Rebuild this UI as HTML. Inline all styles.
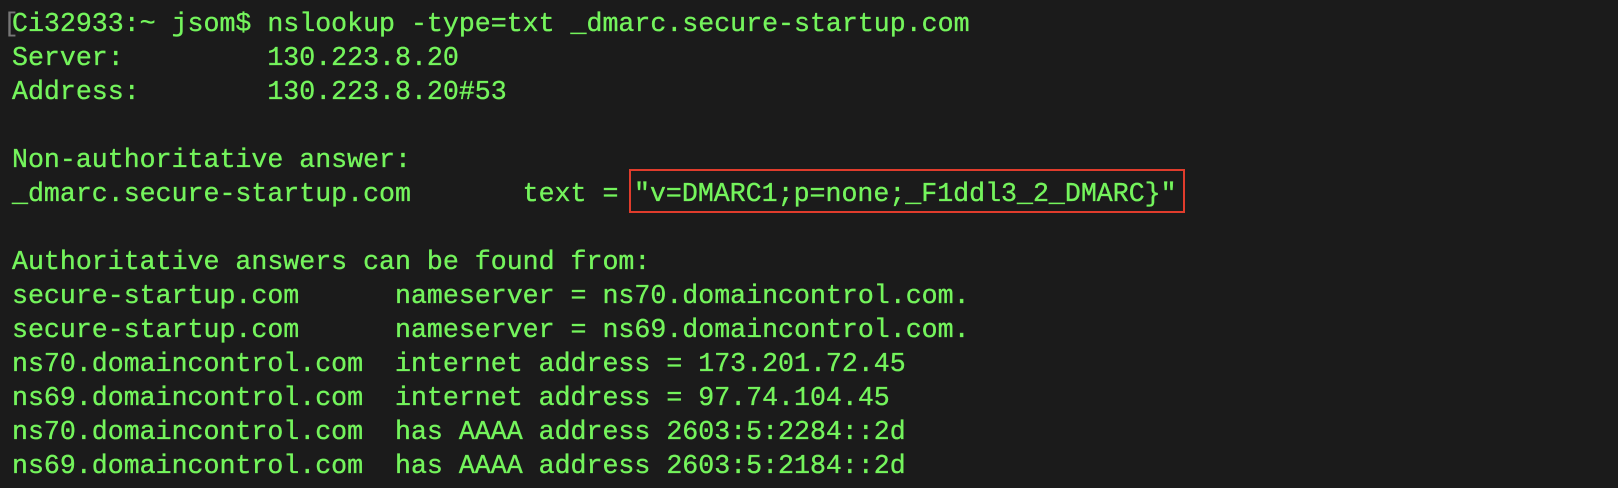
<!DOCTYPE html>
<html><head><style>
html,body{margin:0;padding:0;width:1618px;height:488px;background:#1b1b1b;overflow:hidden}
pre,.br,.q{font-family:"Liberation Mono",monospace;font-size:26.6px;line-height:34px;-webkit-text-stroke:0.35px #74f45c;}
pre{position:absolute;left:12px;top:7px;margin:0;color:#74f45c;}
.br{position:absolute;left:3px;top:7px;color:#777;-webkit-text-stroke:0}
.box{position:absolute;left:629px;top:169px;width:552px;height:40px;border:2px solid #e03c2c;}
.q{position:absolute;left:634px;top:177px;color:#74f45c;white-space:pre}
</style></head><body>
<div class="br">[</div>
<pre>Ci32933:~ jsom$ nslookup -type=txt _dmarc.secure-startup.com
Server:         130.223.8.20
Address:        130.223.8.20#53

Non-authoritative answer:
_dmarc.secure-startup.com       text =

Authoritative answers can be found from:
secure-startup.com      nameserver = ns70.domaincontrol.com.
secure-startup.com      nameserver = ns69.domaincontrol.com.
ns70.domaincontrol.com  internet address = 173.201.72.45
ns69.domaincontrol.com  internet address = 97.74.104.45
ns70.domaincontrol.com  has AAAA address 2603:5:2284::2d
ns69.domaincontrol.com  has AAAA address 2603:5:2184::2d</pre>
<div class="q">"v=DMARC1;p=none;_F1ddl3_2_DMARC}"</div>
<div class="box"></div>
</body></html>
